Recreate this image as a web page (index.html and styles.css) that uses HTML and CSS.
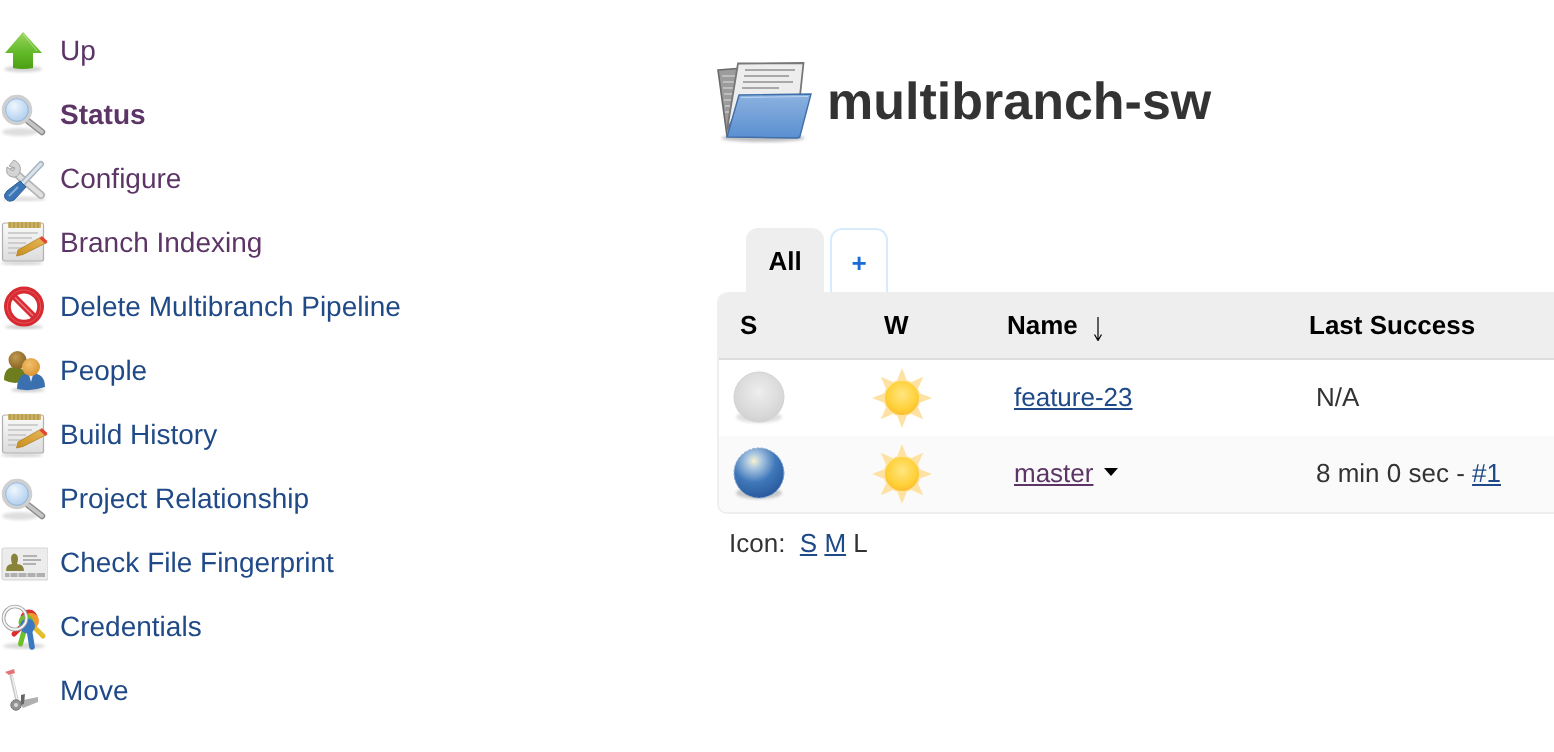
FILE: index.html
```html
<!DOCTYPE html>
<html lang="en">
<head>
<meta charset="utf-8">
<title>multibranch-sw</title>
<link rel="stylesheet" href="styles.css">
</head>
<body>
<svg class="defs" aria-hidden="true">
  <defs>
    <filter id="soft" x="-30%" y="-30%" width="160%" height="160%"><feGaussianBlur stdDeviation="1.6"/></filter>
    <linearGradient id="gUp" x1="0" y1="0" x2="0" y2="1"><stop offset="0" stop-color="#9ad65e"/><stop offset=".55" stop-color="#62b92a"/><stop offset="1" stop-color="#4aa012"/></linearGradient>
    <radialGradient id="gLens" cx=".4" cy=".35" r=".7"><stop offset="0" stop-color="#eef6fd"/><stop offset="1" stop-color="#a5c8ec"/></radialGradient>
    <linearGradient id="gPaper" x1="0" y1="0" x2="0" y2="1"><stop offset="0" stop-color="#fafafa"/><stop offset="1" stop-color="#dcdcdc"/></linearGradient>
    <linearGradient id="gFolder" x1="0" y1="0" x2="0" y2="1"><stop offset="0" stop-color="#8cb2e0"/><stop offset="1" stop-color="#5a8fd0"/></linearGradient>
    <linearGradient id="gPencil" x1="0" y1="1" x2="1" y2="0"><stop offset="0" stop-color="#c98f1d"/><stop offset="1" stop-color="#e9b95c"/></linearGradient>
    <radialGradient id="gGrey" cx=".5" cy=".4" r=".6"><stop offset="0" stop-color="#eeeeee"/><stop offset="1" stop-color="#d2d2d2"/></radialGradient>
    <radialGradient id="gBlue" cx=".4" cy=".26" r=".78"><stop offset="0" stop-color="#f6f2cf"/><stop offset=".2" stop-color="#a9c5e0"/><stop offset=".55" stop-color="#3f78ba"/><stop offset="1" stop-color="#27579a"/></radialGradient>
    <radialGradient id="gSun" cx=".5" cy=".4" r=".62"><stop offset="0" stop-color="#ffe680"/><stop offset=".7" stop-color="#ffd038"/><stop offset="1" stop-color="#fcbb30"/></radialGradient>
    <radialGradient id="gHead1" cx=".4" cy=".35" r=".7"><stop offset="0" stop-color="#c09a50"/><stop offset="1" stop-color="#85601f"/></radialGradient>
    <radialGradient id="gHead2" cx=".4" cy=".35" r=".7"><stop offset="0" stop-color="#f2c070"/><stop offset="1" stop-color="#d9922e"/></radialGradient>

    <symbol id="i-up" viewBox="0 0 48 48">
      <ellipse cx="23" cy="43" rx="19" ry="3" fill="#000" opacity=".18" filter="url(#soft)"/>
      <path d="M23 6 L42 27 L33 27 L33 42 Q23 44 13 42 L13 27 L5 27 Z" fill="url(#gUp)"/>
      <path d="M23 8 L37 25" stroke="#c5ec9c" stroke-width="1" fill="none" opacity=".7"/>
    </symbol>

    <symbol id="i-search" viewBox="0 0 48 48">
      <ellipse cx="20" cy="42" rx="18" ry="4" fill="#000" opacity=".13" filter="url(#soft)"/>
      <path d="M28 31 L42 42" stroke="#8d8d8d" stroke-width="6.5" stroke-linecap="round"/>
      <path d="M28 31 L42 42" stroke="#c6c6c6" stroke-width="3.5" stroke-linecap="round"/>
      <circle cx="17" cy="20" r="13.5" fill="url(#gLens)" stroke="#cfcfcf" stroke-width="3.5"/>
      <circle cx="17" cy="20" r="11.3" fill="none" stroke="#8fb3d9" stroke-width=".9"/>
    </symbol>

    <symbol id="i-tools" viewBox="0 0 48 48">
      <ellipse cx="24" cy="45" rx="22" ry="2.5" fill="#000" opacity=".12" filter="url(#soft)"/>
      <path d="M13 17 L41 41" stroke="#b4b4b4" stroke-width="8" stroke-linecap="round"/>
      <path d="M13 17 L41 41" stroke="#e0e0e0" stroke-width="4.5" stroke-linecap="round"/>
      <path d="M14 6 L9 12 L15 14 L13 17 L7 13 Q5 21 12 23 Q18 24 20 18 Q22 10 14 6 Z" fill="#d4d4d4" stroke="#a4a4a4" stroke-width="1"/>
      <path d="M41 10 L22 30" stroke="#a6b4c2" stroke-width="6" stroke-linecap="round"/>
      <path d="M41 10 L22 30" stroke="#dce3ea" stroke-width="3" stroke-linecap="round"/>
      <path d="M20 27 L26 33 L14 46 Q8 49 5 44 Q3 41 7 37 Z" fill="#3c75b5" stroke="#2d5f9b" stroke-width="1"/>
      <path d="M18 33 L9 42" stroke="#86aed8" stroke-width="1.8"/>
    </symbol>

    <symbol id="i-notepad" viewBox="0 0 48 48">
      <ellipse cx="22" cy="45" rx="21" ry="2.5" fill="#000" opacity=".15" filter="url(#soft)"/>
      <rect x="2.5" y="5" width="41" height="38" rx="2" fill="url(#gPaper)" stroke="#b0b0b0" stroke-width="1.2"/>
      <rect x="8" y="4" width="33" height="6" rx="1" fill="#cdb264"/>
      <path d="M10 4v6M14 4v6M18 4v6M22 4v6M26 4v6M30 4v6M34 4v6M38 4v6" stroke="#a38c42" stroke-width="1"/>
      <path d="M8 15H38M8 20H32M8 25H26M8 30H22M8 35H16" stroke="#c4c4c4" stroke-width="1.6"/>
      <path d="M42 18.5 L47 24.5 L23 36.5 L16.5 38 L18 32 Z" fill="url(#gPencil)" stroke="#a9781c" stroke-width=".7"/>
      <path d="M42 18.5 L47.5 23 L45.5 26 L39.5 20.5 Z" fill="#e2443c"/>
    </symbol>

    <symbol id="i-delete" viewBox="0 0 48 48">
      <ellipse cx="24" cy="45" rx="19" ry="2" fill="#000" opacity=".2" filter="url(#soft)"/>
      <circle cx="24" cy="24.6" r="16.6" fill="#fff" stroke="#d72a31" stroke-width="6.8"/>
      <path d="M12.5 13 L35.5 36" stroke="#d92b33" stroke-width="6.4"/>
      <path d="M15 15.5 L33 33.5" stroke="#ee9194" stroke-width="1.4" opacity=".8"/>
      <circle cx="24" cy="24.6" r="16.6" fill="none" stroke="#ec8a8c" stroke-width="1" opacity=".45"/>
    </symbol>

    <symbol id="i-people" viewBox="0 0 48 48">
      <ellipse cx="28" cy="44" rx="17" ry="2" fill="#000" opacity=".2" filter="url(#soft)"/>
      <path d="M4 34 Q4 21 15 21 Q26 21 26 34 Q15 40 4 34 Z" fill="#6e7d1e"/>
      <circle cx="17.5" cy="14" r="9" fill="url(#gHead1)"/>
      <path d="M17 43 Q17 27 31 27 Q45 27 45 41 Q31 46 17 43 Z" fill="#3a70b0"/>
      <path d="M29 29 L31 36 L33 29 Z" fill="#e3edf7"/>
      <circle cx="31" cy="21" r="9" fill="url(#gHead2)"/>
    </symbol>

    <symbol id="i-card" viewBox="0 0 48 48">
      <rect x="2" y="10" width="46" height="32" rx="2" fill="#ececec" stroke="#d6d6d6" stroke-width="1.2"/>
      <path d="M6 33 Q6 26 12 26 Q10 19 12 17 Q14 14 17 17 Q19 20 17 26 Q24 26 24 33 Z" fill="#8a843a"/>
      <path d="M23 18H37M23 22H41M23 26H36" stroke="#b2b2b2" stroke-width="1.8"/>
      <rect x="5" y="35" width="40" height="4" fill="#b0b0b0"/>
      <path d="M10 35v4M18 35v4M27 35v4M36 35v4" stroke="#e4e4e4" stroke-width="1.2"/>
    </symbol>

    <symbol id="i-keys" viewBox="0 0 48 48">
      <ellipse cx="24" cy="44" rx="21" ry="3" fill="#000" opacity=".15" filter="url(#soft)"/>
      <path d="M25 21 L14 32" stroke="#e02c2c" stroke-width="5" stroke-linecap="round"/>
      <path d="M33 24 L43 34" stroke="#e4bd2e" stroke-width="5" stroke-linecap="round"/>
      <circle cx="29" cy="16" r="8.5" fill="#d9342e"/>
      <circle cx="31" cy="19" r="8" fill="#ef9a2e"/>
      <path d="M25 25 L20.5 42" stroke="#6fbe2e" stroke-width="5" stroke-linecap="round"/>
      <circle cx="26" cy="20" r="7.5" fill="#6fbe2e"/>
      <path d="M29 26 L32 45" stroke="#3a78c0" stroke-width="5.6" stroke-linecap="round"/>
      <circle cx="27.5" cy="24" r="7.5" fill="#3a78c0"/>
      <circle cx="15" cy="16" r="11.5" fill="none" stroke="#a0a0a0" stroke-width="3.6"/>
      <circle cx="15" cy="16" r="11.5" fill="none" stroke="#f6f6f6" stroke-width="1.8"/>
    </symbol>

    <symbol id="i-move" viewBox="0 0 48 48">
      <path d="M11 9 L17 34" stroke="#c8c8c8" stroke-width="3.4"/>
      <path d="M12 10 L17 33" stroke="#f2f2f2" stroke-width="1.2"/>
      <path d="M5 6 L14 3 L15 7 L9 9 Z" fill="#dd5a5e" opacity=".85"/>
      <path d="M18 35 L38 31 L38 36 L23 42 Z" fill="#b0b0b0"/>
      <path d="M21 29 L25 28 L24 38 L21 39 Z" fill="#666"/>
      <circle cx="16" cy="39" r="5.2" fill="#949494" stroke="#767676"/>
      <circle cx="16" cy="39" r="2" fill="#d8d8d8"/>
    </symbol>

    <symbol id="i-folder" viewBox="0 0 96 84">
      <ellipse cx="46" cy="78" rx="42" ry="4" fill="#000" opacity=".25" filter="url(#soft)"/>
      <path d="M1 10 L26 8 L30 70 L10 76 Z" fill="#9c9c9c" stroke="#696969" stroke-width="1.6"/>
      <path d="M5 16H24M6 22H24M6 28H22M7 34H22M7 40H22M8 46H22M8 52H22" stroke="#c9c9c9" stroke-width="1.6"/>
      <path d="M21 3.5 L86.5 3 L83 36 L26 40 L10 70 Z" fill="#ededed" stroke="#777" stroke-width="1.8"/>
      <path d="M28 10H78M27 16H72M26 22H76M25 28H62" stroke="#a8a8a8" stroke-width="2"/>
      <path d="M22 35 L94 34 L83 76 Q83 78 80 78 L10 77 Z" fill="url(#gFolder)" stroke="#3f6fa9" stroke-width="1.4"/>
      <path d="M24 37.5 L91 36.5" stroke="#b9d2ef" stroke-width="1.2"/>
    </symbol>

    <symbol id="i-grey" viewBox="0 0 52 54">
      <ellipse cx="26" cy="46" rx="23" ry="6" fill="#000" opacity=".12" filter="url(#soft)"/>
      <circle cx="26" cy="26" r="25" fill="url(#gGrey)" stroke="#d2d2d2"/>
    </symbol>

    <symbol id="i-blue" viewBox="0 0 52 54">
      <ellipse cx="26" cy="46" rx="23" ry="6" fill="#000" opacity=".2" filter="url(#soft)"/>
      <circle cx="26" cy="26" r="25" fill="url(#gBlue)" stroke="#86a6d0" stroke-dasharray="3 1.4"/>
    </symbol>

    <symbol id="i-sun" viewBox="0 0 60 60">
      <g fill="#fee2a4">
        <path d="M30 0 L35.5 14 L24.5 14 Z"/>
        <path d="M30 0 L35.5 14 L24.5 14 Z" transform="rotate(45 30 30)"/>
        <path d="M30 0 L35.5 14 L24.5 14 Z" transform="rotate(90 30 30)"/>
        <path d="M30 0 L35.5 14 L24.5 14 Z" transform="rotate(135 30 30)"/>
        <path d="M30 0 L35.5 14 L24.5 14 Z" transform="rotate(180 30 30)"/>
        <path d="M30 0 L35.5 14 L24.5 14 Z" transform="rotate(225 30 30)"/>
        <path d="M30 0 L35.5 14 L24.5 14 Z" transform="rotate(270 30 30)"/>
        <path d="M30 0 L35.5 14 L24.5 14 Z" transform="rotate(315 30 30)"/>
      </g>
      <circle cx="30" cy="30" r="18.5" fill="#fee3a2"/>
      <circle cx="30" cy="30" r="17" fill="url(#gSun)"/>
    </symbol>

    <symbol id="i-sort" viewBox="0 0 12 24">
      <path d="M6 0V22M2.5 17.5L6 23.5L9.5 17.5" fill="none" stroke="#000" stroke-width="1.2"/>
    </symbol>
  </defs>
</svg>

<div class="page">
  <nav class="sidebar">
    <a class="task visited" href="#"><svg class="task-icon"><use href="#i-up"/></svg>Up</a>
    <a class="task visited current" href="#"><svg class="task-icon"><use href="#i-search"/></svg>Status</a>
    <a class="task visited" href="#"><svg class="task-icon"><use href="#i-tools"/></svg>Configure</a>
    <a class="task visited" href="#"><svg class="task-icon"><use href="#i-notepad"/></svg>Branch Indexing</a>
    <a class="task" href="#"><svg class="task-icon"><use href="#i-delete"/></svg>Delete Multibranch Pipeline</a>
    <a class="task" href="#"><svg class="task-icon"><use href="#i-people"/></svg>People</a>
    <a class="task" href="#"><svg class="task-icon"><use href="#i-notepad"/></svg>Build History</a>
    <a class="task" href="#"><svg class="task-icon"><use href="#i-search"/></svg>Project Relationship</a>
    <a class="task" href="#"><svg class="task-icon"><use href="#i-card"/></svg>Check File Fingerprint</a>
    <a class="task" href="#"><svg class="task-icon"><use href="#i-keys"/></svg>Credentials</a>
    <a class="task" href="#"><svg class="task-icon"><use href="#i-move"/></svg>Move</a>
  </nav>

  <main class="main">
    <h1 class="title"><svg class="folder-icon"><use href="#i-folder"/></svg>multibranch-sw</h1>

    <div class="tabs">
      <div class="tab active">All</div>
      <a class="tab add" href="#">+</a>
    </div>

    <table class="jobs">
      <colgroup>
        <col class="c-s"><col class="c-w"><col class="c-name"><col class="c-last">
      </colgroup>
      <thead>
        <tr>
          <th class="th-s">S</th>
          <th class="th-w">W</th>
          <th class="th-name">Name<svg class="sort"><use href="#i-sort"/></svg></th>
          <th class="th-last">Last Success</th>
        </tr>
      </thead>
      <tbody>
        <tr>
          <td class="td-icon"><svg class="ball"><use href="#i-grey"/></svg></td>
          <td class="td-icon"><svg class="sun"><use href="#i-sun"/></svg></td>
          <td class="td-text"><a class="link" href="#">feature-23</a></td>
          <td class="td-text">N/A</td>
        </tr>
        <tr class="even">
          <td class="td-icon"><svg class="ball"><use href="#i-blue"/></svg></td>
          <td class="td-icon"><svg class="sun"><use href="#i-sun"/></svg></td>
          <td class="td-text"><a class="link visited" href="#">master</a><span class="caret"></span></td>
          <td class="td-text">8 min 0 sec - <a class="link" href="#">#1</a></td>
        </tr>
      </tbody>
    </table>

    <p class="sizes">Icon:&nbsp;&nbsp;<a class="link" href="#">S</a> <a class="link" href="#">M</a> L</p>
  </main>
</div>
</body>
</html>
```

FILE: styles.css
```css
* { box-sizing: border-box; }

html, body {
  margin: 0;
  height: 100%;
  overflow: hidden;
  background: #fff;
}

body {
  font-family: "Liberation Sans", Arial, sans-serif;
  color: #333;
  text-rendering: geometricPrecision;
}

.defs {
  display: block;
  width: 0;
  height: 0;
}

.page {
  display: flex;
  height: 752px;
  filter: blur(.3px);
}

.sidebar {
  flex: 0 0 717px;
  display: flex;
  flex-direction: column;
  padding-top: 19px;
}

.task {
  display: flex;
  align-items: center;
  gap: 12px;
  height: 64px;
  font-size: 28px;
  color: #204a87;
  text-decoration: none;
}

.task.visited { color: #5c3566; }
.task.current { font-weight: 700; }

.task-icon {
  flex: none;
  width: 48px;
  height: 48px;
  margin-bottom: 2px;
  filter: blur(.5px);
}

.main {
  flex: 1;
  min-width: 0;
}

.title {
  display: flex;
  align-items: center;
  gap: 14px;
  margin: 60px 0 0;
  height: 84px;
  font-size: 52px;
  font-weight: 700;
  color: #333;
}

.folder-icon {
  flex: none;
  width: 96px;
  height: 84px;
  filter: blur(.5px);
}

.tabs {
  display: flex;
  gap: 6px;
  margin: 84px 0 0 29px;
  height: 64px;
}

.tab {
  display: flex;
  align-items: center;
  justify-content: center;
  font-size: 26px;
  font-weight: 700;
  border-radius: 12px 12px 0 0;
  text-decoration: none;
}

.tab.active {
  width: 78px;
  padding-top: 3px;
  background: #eee;
  color: #000;
}

.tab.add {
  width: 58px;
  padding-top: 4px;
  border: 2px solid #d8ebfd;
  border-bottom: 0;
  color: #1a6ad8;
}

.jobs {
  width: 900px;
  table-layout: fixed;
  border-collapse: separate;
  border-spacing: 0;
  border: 2px solid #eee;
  border-right: 0;
  border-top: 0;
  border-radius: 10px 0 0 10px;
  font-size: 26px;
}

.c-s { width: 139px; }
.c-w { width: 135px; }
.c-name { width: 302px; }

.jobs th {
  height: 68px;
  background: #eee;
  border-bottom: 2px solid #ddd;
  font-weight: 700;
  color: #000;
  text-align: left;
  padding: 0 0 0 14px;
}

.jobs th:first-child { border-top-left-radius: 10px; }

.jobs .th-s { padding-left: 21px; }
.jobs .th-w { padding-left: 26px; }

.sort {
  width: 12px;
  height: 24px;
  margin-left: 14px;
  vertical-align: -7px;
}

.jobs td {
  height: 76px;
  padding: 0;
  vertical-align: middle;
}

.jobs .even td { background: #fafafa; }
.jobs .even td:first-child { border-bottom-left-radius: 8px; }

.jobs .td-icon { padding-left: 14px; }
.jobs .td-text { padding: 0 0 2px 21px; }

.ball, .sun {
  display: block;
  filter: blur(.3px);
}

.ball {
  width: 52px;
  height: 54px;
}

.sun {
  width: 60px;
  height: 60px;
}

.link {
  color: #204a87;
  text-decoration: underline;
}

.link.visited { color: #5c3566; }

.caret {
  display: inline-block;
  margin-left: 11px;
  vertical-align: 6px;
  border-style: solid;
  border-width: 8px 7.5px 0;
  border-color: #000 transparent transparent;
}

.sizes {
  margin: 14px 0 0 12px;
  font-size: 26px;
  line-height: 30px;
}
```
